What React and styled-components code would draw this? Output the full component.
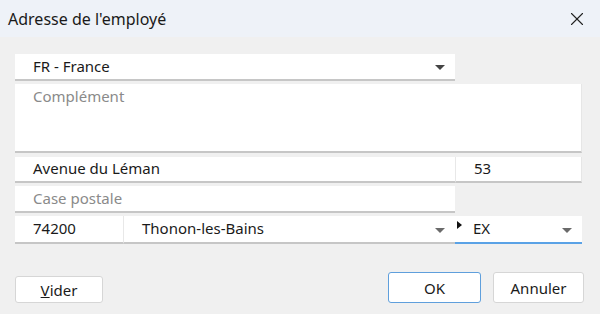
import React from 'react';
import styled, { createGlobalStyle } from 'styled-components';
import { X } from 'lucide-react';

const Global = createGlobalStyle`
  html, body {
    margin: 0;
    padding: 0;
    background: #f0f0f0;
  }
  * {
    box-sizing: border-box;
  }
`;

const Dialog = styled.div`
  width: 600px;
  height: 314px;
  display: flex;
  flex-direction: column;
  background: #f0f0f0;
  font-family: 'Noto Sans', 'Open Sans', sans-serif;
  color: #1a1a1a;
  overflow: hidden;
`;

const TitleBar = styled.div`
  height: 37px;
  flex: none;
  display: flex;
  align-items: center;
  justify-content: space-between;
  padding: 0 12px 0 8px;
  background: #eef2f8;
  font-size: 16px;
`;

const Close = styled.div`
  display: flex;
  align-items: center;
  color: #222;
`;

const Form = styled.div`
  display: grid;
  grid-template-columns: 108px 332px 127px;
  grid-template-rows: 27px 69px 27px 27px 28px;
  row-gap: 3px;
  padding: 17px 0 0 15px;
`;

const Field = styled.div`
  grid-column: ${({ $col }) => $col};
  margin-top: ${({ $mt }) => $mt || 0}px;
  display: flex;
  align-items: ${({ $top }) => ($top ? 'flex-start' : 'center')};
  padding: ${({ $top }) => ($top ? '2px 10px 0 18px' : '0 10px 2px 18px')};
  background: #fff;
  border-bottom: 2px solid ${({ $focus }) => ($focus ? '#5aa2e6' : '#c6c6c6')};
  border-left: ${({ $sep }) => ($sep ? '1px solid #e8e8e8' : 'none')};
  border-right: ${({ $edge }) => ($edge ? '1px solid #e6e6e6' : 'none')};
  font-size: 15px;
  color: ${({ $hint }) => ($hint ? '#8a8a8a' : '#1a1a1a')};
  position: relative;
`;

const Value = styled.span`
  flex: 1;
  white-space: nowrap;
`;

const Arrow = styled.span`
  width: 0;
  height: 0;
  border-left: 5px solid transparent;
  border-right: 5px solid transparent;
  border-top: 5px solid ${({ $light }) => ($light ? '#6a6a6a' : '#444')};
  margin-top: 4px;
`;

const RowMark = styled.span`
  position: absolute;
  left: 2px;
  top: 5px;
  width: 0;
  height: 0;
  border-top: 4px solid transparent;
  border-bottom: 4px solid transparent;
  border-left: 5px solid #111;
`;

const Buttons = styled.div`
  margin-top: auto;
  display: flex;
  align-items: flex-end;
  padding: 0 16px 11px 15px;
`;

const Button = styled.button`
  width: ${({ $w }) => $w}px;
  height: ${({ $h }) => $h || 31}px;
  margin-left: ${({ $ml }) => $ml || 0}px;
  background: #fff;
  border: 1px solid ${({ $primary }) => ($primary ? '#5f9fdc' : '#d6d6d6')};
  border-radius: 3px;
  font-family: 'Noto Sans', 'Open Sans', sans-serif;
  font-size: 15px;
  color: #1a1a1a;
  padding: 0;
`;

const Spacer = styled.div`
  flex: 1;
`;

export default function App() {
  return (
    <>
      <Global />
      <Dialog>
        <TitleBar>
          <span>Adresse de l'employé</span>
          <Close>
            <X size={22} strokeWidth={1.2} />
          </Close>
        </TitleBar>
        <Form>
          <Field $col="1 / 3">
            <Value>FR - France</Value>
            <Arrow />
          </Field>
          <Field $col="1 / 4" $top $hint $edge>
            Complément
          </Field>
          <Field $col="1 / 3" $mt={1}>
            <Value>Avenue du Léman</Value>
          </Field>
          <Field $col="3 / 4" $mt={1} $sep $edge>
            <Value>53</Value>
          </Field>
          <Field $col="1 / 3" $hint>
            Case postale
          </Field>
          <Field $col="1 / 2">
            <Value>74200</Value>
          </Field>
          <Field $col="2 / 3" $sep>
            <Value>Thonon-les-Bains</Value>
            <Arrow $light />
          </Field>
          <Field $col="3 / 4" $focus>
            <RowMark />
            <Value>EX</Value>
            <Arrow $light />
          </Field>
        </Form>
        <Buttons>
          <Button $w={88} $h={27}>
            <u>V</u>ider
          </Button>
          <Spacer />
          <Button $w={93} $primary>OK</Button>
          <Button $w={91} $ml={12}>Annuler</Button>
        </Buttons>
      </Dialog>
    </>
  );
}
